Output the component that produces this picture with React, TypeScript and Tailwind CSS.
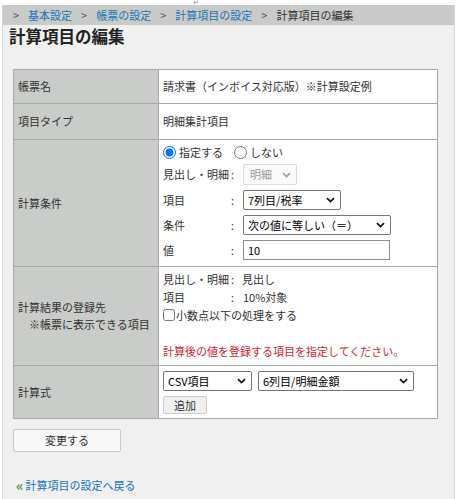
import React from 'react';

const FONT = "font-['Noto_Sans_CJK_JP','Noto_Sans',sans-serif]";

function Chevron({ muted }: { muted?: boolean }) {
  return (
    <svg
      width="9"
      height="6"
      viewBox="0 0 9 6"
      className="pointer-events-none absolute right-[6px] top-1/2 -translate-y-1/2"
    >
      <path
        d="M1 1.2 L4.5 4.6 L8 1.2"
        fill="none"
        stroke={muted ? '#a0a0a0' : '#111'}
        strokeWidth="1.7"
      />
    </svg>
  );
}

function Select({ value, width, disabled }: { value: string; width: string; disabled?: boolean }) {
  return (
    <div className={`relative h-full ${width}`}>
      <select
        disabled={disabled}
        defaultValue={value}
        className={
          disabled
            ? 'h-full w-full appearance-none rounded-[2px] border border-[#dcdcdc] bg-[#fafafa] pl-[6px] text-[11px] text-[#9a9a9a]'
            : 'h-full w-full appearance-none rounded-[2px] border border-[#767676] bg-white pl-[4px] text-[11px] text-black'
        }
      >
        <option>{value}</option>
      </select>
      <Chevron muted={disabled} />
    </div>
  );
}

function FieldRow({ label, children }: { label: string; children: React.ReactNode }) {
  return (
    <div className="flex h-[20px] items-center">
      <span className="w-[68px]">{label}</span>
      <span className="w-[12px]">:</span>
      {children}
    </div>
  );
}

export default function App() {
  return (
    <div className={`min-h-[499px] w-[457px] bg-white text-[11px] text-[#333] ${FONT}`}>
      {/* 上端 */}
      <div className="flex h-[5px] items-center pl-[193px] text-[7px] leading-[5px] text-[#888]">↵</div>

      <div className="ml-[2px] min-h-[494px] w-[453px] border-x border-[#d6d7d6] bg-[#eff0ef]">
        {/* パンくず */}
        <div className="flex h-[20px] items-center gap-[9px] bg-[#c8cbc8] pl-[10px] pt-[1px] text-[11px] leading-none">
          <span className="text-[#555]">&gt;</span>
          <a className="text-[#2474b5]">基本設定</a>
          <span className="text-[#555]">&gt;</span>
          <a className="text-[#2474b5]">帳票の設定</a>
          <span className="text-[#555]">&gt;</span>
          <a className="text-[#2474b5]">計算項目の設定</a>
          <span className="text-[#555]">&gt;</span>
          <span className="text-[#333]">計算項目の編集</span>
        </div>

        <h1 className="h-[20px] pl-[6px] pt-[1px] text-[16.5px] font-bold leading-[20px] text-[#222]">計算項目の編集</h1>

        <div className="px-[10px] pt-[24px]">
          <table className="w-[425px] border-collapse">
            <tbody>
              <tr>
                <td className="h-[34px] w-[145px] border border-[#a8aaa8] bg-[#c9ccc9] pl-[4px] align-middle">帳票名</td>
                <td className="border border-[#a8aaa8] bg-white pl-[4px] align-middle">請求書（インボイス対応版）※計算設定例</td>
              </tr>
              <tr>
                <td className="h-[36px] border border-[#a8aaa8] bg-[#c9ccc9] pl-[4px] align-middle">項目タイプ</td>
                <td className="border border-[#a8aaa8] bg-white pl-[4px] align-middle">明細集計項目</td>
              </tr>
              <tr>
                <td className="border border-[#a8aaa8] bg-[#c9ccc9] pl-[4px] align-middle">計算条件</td>
                <td className="border border-[#a8aaa8] bg-white px-[4px] pb-[6px] pt-[3px] align-top">
                  <div className="flex h-[19px] items-center">
                    <label className="flex items-center gap-[3px]">
                      <input type="radio" name="cond" defaultChecked className="m-0 h-[13px] w-[13px]" />
                      <span>指定する</span>
                    </label>
                    <label className="ml-[11px] flex items-center gap-[3px]">
                      <input type="radio" name="cond" className="m-0 h-[13px] w-[13px]" />
                      <span>しない</span>
                    </label>
                  </div>
                  <div className="mt-[2px] flex flex-col gap-[5px]">
                    <div className="flex h-[21px] items-center">
                      <span className="w-[68px]">見出し・明細</span>
                      <span className="w-[12px]">:</span>
                      <Select value="明細" width="w-[54px]" disabled />
                    </div>
                    <FieldRow label="項目">
                      <Select value="7列目/税率" width="w-[98px]" />
                    </FieldRow>
                    <FieldRow label="条件">
                      <Select value="次の値に等しい（＝）" width="w-[148px]" />
                    </FieldRow>
                    <FieldRow label="値">
                      <input
                        defaultValue="10"
                        className="h-full w-[147px] border border-[#8f8f8f] bg-white pl-[4px] text-[11px] text-black"
                      />
                    </FieldRow>
                  </div>
                </td>
              </tr>
              <tr>
                <td className="border border-[#a8aaa8] bg-[#c9ccc9] pl-[4px] align-middle leading-[17px]">
                  <div>計算結果の登録先</div>
                  <div className="pl-[11px]">※帳票に表示できる項目</div>
                </td>
                <td className="border border-[#a8aaa8] bg-white px-[4px] pb-[5px] pt-[3px] align-top leading-[18px]">
                  <div className="flex">
                    <span className="w-[68px]">見出し・明細</span>
                    <span className="w-[11px]">:</span>
                    <span>見出し</span>
                  </div>
                  <div className="flex">
                    <span className="w-[68px]">項目</span>
                    <span className="w-[12px]">:</span>
                    <span>10%対象</span>
                  </div>
                  <label className="flex h-[18px] items-center gap-[1px]">
                    <input type="checkbox" className="m-0 h-[12px] w-[12px]" />
                    <span>小数点以下の処理をする</span>
                  </label>
                  <div className="h-[18px]" />
                  <div className="text-[#cc1e3c]">計算後の値を登録する項目を指定してください。</div>
                </td>
              </tr>
              <tr>
                <td className="border border-[#a8aaa8] bg-[#c9ccc9] pl-[4px] align-middle">計算式</td>
                <td className="border border-[#a8aaa8] bg-white px-[4px] pb-[4px] pt-[5px] align-top">
                  <div className="flex h-[20px] gap-[6px]">
                    <Select value="CSV項目" width="w-[89px]" />
                    <Select value="6列目/明細金額" width="w-[156px]" />
                  </div>
                  <button className="mt-[5px] h-[18px] w-[44px] rounded-[2px] border border-[#cdcdcd] bg-[#f0f0f0] text-[11px] leading-none text-[#333]">
                    追加
                  </button>
                </td>
              </tr>
            </tbody>
          </table>

          <button className="mt-[10px] h-[23px] w-[108px] rounded-[2px] border border-[#c8c8c8] bg-[#f8f8f8] text-[11px] leading-none text-[#333]">
            変更する
          </button>

          <div className="mt-[25px] flex items-center gap-[2px] pl-[3px] text-[11px]">
            <span className="text-[14px] font-bold leading-none text-[#3a9a3a]">«</span>
            <a className="text-[#2474b5]">計算項目の設定へ戻る</a>
          </div>
        </div>
      </div>
    </div>
  );
}
